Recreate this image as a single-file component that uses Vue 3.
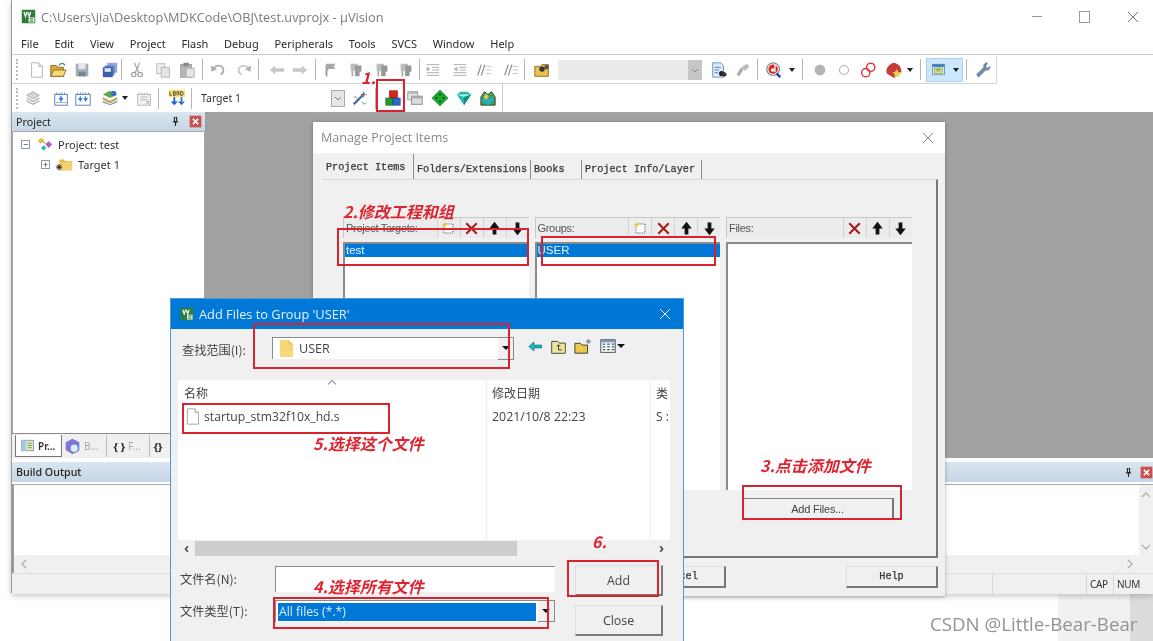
<script setup>
import { h } from 'vue'

const icons = {
  logo: '<rect x="1" y="1" width="18" height="18" rx="1" fill="#2f7d3b"/><path d="M4 4l2 6 2-6M9 4l2 6 2-6" stroke="#fff" stroke-width="1.6" fill="none"/><rect x="10" y="11" width="8" height="7" fill="#dfe8df"/><path d="M12 13h4M12 16h4" stroke="#2f7d3b" stroke-width="1.4"/>',
  new: '<path d="M4 2h8l4 4v12H4z" fill="#fff" stroke="#a9b0ba"/><path d="M12 2v4h4" fill="#e8eef5" stroke="#a9b0ba"/>',
  open: '<path d="M2 5h6l2 2h6v10H2z" fill="#d9a93c" stroke="#8a6a20"/><path d="M5 10h14l-3 7H2z" fill="#f6d97a" stroke="#8a6a20"/><path d="M11 5c2-3 5-3 7 0" stroke="#4a7fc0" fill="none" stroke-width="1.4"/>',
  save: '<rect x="3" y="3" width="14" height="14" fill="#a5adb6"/><rect x="6" y="3" width="8" height="6" fill="#e4e8ec"/><rect x="6" y="12" width="8" height="5" fill="#7b848d"/>',
  saveall: '<rect x="7" y="2" width="11" height="11" fill="#8fa7d8"/><rect x="4" y="5" width="11" height="11" fill="#5f7fc4"/><rect x="2" y="7" width="11" height="11" fill="#3f5fa8"/><rect x="4" y="8" width="7" height="4" fill="#dfe6f5"/>',
  cut: '<path d="M7 2l5 11M13 2L8 13" stroke="#a8a8a8" stroke-width="1.5"/><circle cx="6.5" cy="15" r="2.4" fill="none" stroke="#a0a0a0" stroke-width="1.4"/><circle cx="13.5" cy="15" r="2.4" fill="none" stroke="#a0a0a0" stroke-width="1.4"/>',
  copy: '<rect x="3" y="3" width="9" height="11" fill="#eee" stroke="#bbb"/><rect x="8" y="7" width="9" height="11" fill="#e4e4e4" stroke="#b4b4b4"/>',
  paste: '<rect x="3" y="4" width="12" height="14" fill="#b8b8b8" stroke="#999"/><rect x="6" y="2" width="6" height="4" fill="#888"/><rect x="9" y="8" width="9" height="10" fill="#e6e6e6" stroke="#aaa"/>',
  undo: '<path d="M5 8c3-4 10-4 11 2 0 2-1 4-3 5" stroke="#adadad" stroke-width="2" fill="none"/><path d="M2 5l1 7 6-3z" fill="#adadad"/>',
  redo: '<g transform="matrix(-1 0 0 1 20 0)"><path d="M5 8c3-4 10-4 11 2 0 2-1 4-3 5" stroke="#c0c0c0" stroke-width="1.6" fill="none"/><path d="M2 5l1 7 6-3z" fill="#b0b0b0"/></g>',
  back: '<path d="M2 10l6-5v3h10v4H8v3z" fill="#c8c8c8"/>',
  fwd: '<path d="M18 10l-6-5v3H2v4h10v3z" fill="#c8c8c8"/>',
  flag: '<path d="M5 17V4" stroke="#9a9a9a" stroke-width="2"/><path d="M5 3h10l-2 3 2 3H7v2H5z" fill="#a8a8a8"/>',
  flag2: '<path d="M4 3h8v8H4z" fill="#bbb"/><path d="M9 5h7v7h-2v5H9z" fill="#999"/><path d="M6 11v6" stroke="#aaa" stroke-width="2"/>',
  ind: '<path d="M3 4h14M9 7h8M9 10h8M3 13h14M3 16h14" stroke="#a8a8a8"/><path d="M3 6.5l4 2.5-4 2.5z" fill="#aaa"/>',
  ind2: '<path d="M3 4h14M9 7h8M9 10h8M3 13h14M3 16h14" stroke="#a8a8a8"/><path d="M7 6.5L3 9l4 2.5z" fill="#aaa"/>',
  com: '<path d="M3 16L7 4M7 16l4-12" stroke="#8e8e8e" stroke-width="1.4"/><path d="M12 6h6M12 10h6M12 14h6" stroke="#c0c0c0"/>',
  find: '<path d="M2 6h6l2-2h7v13H2z" fill="#eac04e" stroke="#8a6a20"/><circle cx="10" cy="9" r="3" fill="#333"/><circle cx="15" cy="7" r="2.5" fill="#555"/>',
  doc: '<path d="M3 2h9l3 3v13H3z" fill="#dfe9f5" stroke="#6f8fb8"/><path d="M5 7h7M5 10h5M5 13h4" stroke="#4a78b8"/><circle cx="13" cy="14" r="3" fill="#222"/><circle cx="16" cy="15" r="2.4" fill="#333"/>',
  tools: '<path d="M4 15l5-8 3 2-5 8z" fill="#aaa"/><path d="M10 6l6-3 2 4-5 4z" fill="#bcbcbc"/>',
  dsearch: '<circle cx="9" cy="9" r="7" fill="#fff" stroke="#8a9098" stroke-width="1.5"/><circle cx="9" cy="9" r="5.2" fill="#d82020"/><circle cx="8.4" cy="10" r="2" fill="#fff"/><path d="M11 4.5v8" stroke="#fff" stroke-width="1.5"/><path d="M13 14l4 4" stroke="#1c3fa8" stroke-width="2.6"/>',
  dot: '<circle cx="10" cy="10" r="6" fill="#b4b4b4"/>',
  ring: '<circle cx="10" cy="10" r="5" fill="#fff" stroke="#b4b4b4" stroke-width="1.3"/>',
  rings: '<circle cx="7.5" cy="13" r="4.6" fill="none" stroke="#d84040" stroke-width="1.6"/><circle cx="13" cy="7" r="4.6" fill="none" stroke="#d84040" stroke-width="1.6"/>',
  heart: '<path d="M10 2c5 1 9 5 8 11l-8 6-8-5C0 8 5 3 10 2z" fill="#c63a3a"/><path d="M13 9l1.5 3 3.5.5-2.5 2.2.7 3.3-3-1.6-3 1.6.7-3.3L8 12.500l3.500-.5z" fill="#e6d24a"/>',
  pwin: '<rect x="2" y="3" width="16" height="14" fill="#dfe9f5" stroke="#4f86bd"/><rect x="2" y="3" width="16" height="3.500" fill="#3c7dc0"/><rect x="5" y="8" width="10" height="7" fill="#e8e8a0" stroke="#7f9a3c"/><path d="M7 10h6M7 12h6" stroke="#5f8a2c"/>',
  wrench: '<path d="M15 2c-3 0-5 2-4 5L3 15l2 3 8-8c3 1 5-1 5-4l-3 2-2-2z" fill="#6f8fb0" stroke="#52677c" stroke-width=".6"/>',
  stack: '<path d="M10 3l7 4-7 4-7-4z" fill="#d6d6d6" stroke="#aaa"/><path d="M3 10l7 4 7-4M3 13l7 4 7-4" fill="none" stroke="#aaa" stroke-width="1.300"/>',
  t1: '<rect x="3" y="6" width="14" height="12" fill="#fff" stroke="#5878a8"/><path d="M5 4v2M8 4v2M11 4v2M14 4v2" stroke="#5878a8"/><path d="M10 7.500v5M8 10l2 3 2-3" stroke="#2878d0" fill="none" stroke-width="1.500"/><path d="M4 15h12" stroke="#9aa"/>',
  t2: '<rect x="2" y="6" width="16" height="12" fill="#fff" stroke="#5878a8"/><path d="M4 4v2M7 4v2M10 4v2M13 4v2M16 4v2" stroke="#5878a8"/><path d="M7 8v5M5 10l2 3 2-3M13 8v5M11 10l2 3 2-3" stroke="#2878d0" fill="none" stroke-width="1.300"/>',
  layers: '<path d="M10 2l8 4-8 4-8-4z" fill="#5fa84a"/><path d="M2 9l8 4 8-4v3l-8 4-8-4z" fill="#c8a858"/><path d="M2 13l8 4 8-4v2l-8 3-8-3z" fill="#7898c8"/><circle cx="14" cy="5" r="3" fill="#3a70c0"/>',
  batch: '<rect x="3" y="6" width="14" height="12" fill="#f2f2f2" stroke="#b4b4b4"/><path d="M5 4v2M8 4v2M11 4v2M14 4v2M6 9h8M6 12h8" stroke="#b4b4b4"/><path d="M12 13l4 4M16 13l-4 4" stroke="#999"/>',
  load: '<path d="M6 9v5H3l4 4 4-4H8V9z" fill="#2060c8"/><path d="M14 9v5h-3l4 4 4-4h-3V9z" fill="#2060c8" opacity=".9"/><rect x="1" y="1" width="18" height="8" fill="#f6e27a"/><path d="M2 3v4h2M6 3h2v4H6zM10 7V3h2v4M14 3v4h2l1-2-1-2z" stroke="#222" stroke-width=".8" fill="none"/>',
  wand: '<path d="M3 17L13 7" stroke="#3868b0" stroke-width="2.500"/><path d="M14 2l1 3 3 1-3 1-1 3-1-3-3-1 3-1z" fill="#7a7a7a"/><path d="M3 10l2-2 2 3M12 14l2 3 3-2" stroke="#888" fill="none"/>',
  blocks: '<rect x="6" y="2" width="9" height="8" fill="#e02020" stroke="#801010" stroke-width=".6"/><rect x="2" y="10" width="8" height="8" fill="#1e9a2e" stroke="#0c5a14" stroke-width=".6"/><rect x="10" y="10" width="8" height="8" fill="#2c68c8" stroke="#143c80" stroke-width=".6"/>',
  wins: '<rect x="2" y="3" width="11" height="9" fill="#e8e8e8" stroke="#999"/><rect x="6" y="8" width="12" height="9" fill="#dcdcdc" stroke="#888"/><rect x="6" y="8" width="12" height="2.500" fill="#aaa"/><rect x="2" y="3" width="11" height="2.500" fill="#bbb"/>',
  dgreen: '<path d="M10 1l9 9-9 9-9-9z" fill="#1ca82a" stroke="#0c7018" stroke-width=".6"/><circle cx="10" cy="6" r="1.400" fill="#063"/><circle cx="6" cy="10" r="1.400" fill="#063"/><circle cx="14" cy="10" r="1.400" fill="#063"/><circle cx="10" cy="14" r="1.400" fill="#063"/>',
  dteal: '<path d="M2 6l4-3h8l4 3-8 12z" fill="#28b8a8"/><path d="M2 6h16l-8 3z" fill="#c8f0e8"/><path d="M10 9l8-3-8 12z" fill="#10907f"/>',
  books: '<path d="M2 18V9l4-6 4 3 4-3 4 6v9z" fill="#3aa04a" stroke="#222" stroke-width=".8"/><path d="M6 8l4 4 4-4 3 5-7 5-7-5z" fill="#2ea8c8"/><path d="M8 5l3 4-3 3-3-3z" fill="#e0c84a"/>',
  pin: '<path d="M7 2h6v8h2v2h-4v6H9v-6H5v-2h2z" fill="#222"/><rect x="9" y="3" width="2" height="6" fill="#ddd"/>',
  close: '<rect x="1" y="1" width="18" height="18" fill="#c9514f"/><path d="M6 6l8 8M14 6l-8 8" stroke="#fff" stroke-width="2.400"/>',
  tree: '<path d="M2 5l5-3 3 4-5 3z" fill="#e8c040"/><path d="M11 10l4-4 4 4-4 4z" fill="#b060c8"/><path d="M6 14l3-3 3 3-3 3z" fill="#30a8c8"/><path d="M8 7l4 2" stroke="#888"/>',
  folder: '<path d="M5 5h5l1 2h8v10H5z" fill="#e8b840"/><rect x="5" y="8" width="14" height="9" fill="#f4d070"/><path d="M2 11l5 5M7 11l-5 5M4.500 10v7M1 13.500h7" stroke="#222" stroke-width="1.100"/>',
  tdash: '<rect x="4" y="4" width="12" height="12" fill="#fff" stroke="#222" stroke-dasharray="1.500 1.500"/><path d="M5 1l1.300 2.700L9 5 6.300 6.300 5 9 3.700 6.300 1 5l2.700-1.300z" fill="#e8d030"/>',
  tx: '<path d="M3 3l14 14M17 3L3 17" stroke="#a81a1a" stroke-width="2.800"/>',
  tup: '<path d="M10 1l7 9h-4.500v8h-5v-8H3z" fill="#111"/>',
  tdown: '<path d="M10 19l7-9h-4.500V2h-5v8H3z" fill="#111"/>',
  file: '<path d="M4 1h9l4 4v14H4z" fill="#fff" stroke="#9a9a9a"/><path d="M13 1v4h4" fill="#eee" stroke="#9a9a9a"/>',
  yfolder: '<path d="M3 1h9l5 4v14H3z" fill="#f6d877"/><path d="M12 1v5h5" fill="#eac45c"/>',
  barrow: '<path d="M1 10l7-6v4h10v4H8v4z" fill="#18b8c0" stroke="#0c4850" stroke-width=".7"/>',
  bup: '<path d="M2 4h7l2 2h7v12H2z" fill="#eee69a" stroke="#333"/><path d="M10 8v6h4M8 10l2-2 2 2" stroke="#222" fill="none"/>',
  bnew: '<path d="M1 7h6l2 2h6v9H1z" fill="#eac84a" stroke="#333"/><path d="M16 2v6M13 5h6M14 3l4 4M18 3l-4 4" stroke="#888"/>',
  bview: '<rect x="2" y="3" width="16" height="14" fill="#fff" stroke="#345"/><rect x="2" y="3" width="16" height="3" fill="#8098b8"/><path d="M4 8h3M9 8h3M14 8h3M4 11h3M9 11h3M14 11h3M4 14h3M9 14h3M14 14h3" stroke="#456" stroke-width="1.400"/>',
  mini: '<rect x="2" y="3" width="16" height="14" fill="#dfe9c8" stroke="#6a8a9a"/><rect x="2" y="3" width="6" height="14" fill="#a8c8e8"/><path d="M10 7h6M10 10h6M10 13h6" stroke="#6a8a2a"/>',
  cube: '<path d="M10 1l8 4v9l-8 5-8-5V5z" fill="#8870d8"/><circle cx="12" cy="12" r="5" fill="#e8e8f8" stroke="#4890d0" stroke-width="1.500"/>',
}

const Ico = (props) => h('svg', { class: 'ico', viewBox: '0 0 20 20', width: props.s || 18, height: props.s || 18, innerHTML: icons[props.n] })
Ico.props = ['n', 's']

function place(items) {
  let end = 12
  return items.map((it) => {
    const w = it.w || (it.sep ? 1 : 18)
    const left = it.c - w / 2
    const m = left - end
    end = left + w
    return { ...it, w, m }
  })
}

const bar1 = place([
  { c: 17, w: 2, grip: true }, { c: 37, i: 'new' }, { c: 58, i: 'open' }, { c: 82, i: 'save' }, { c: 110, i: 'saveall' },
  { c: 121, sep: true }, { c: 137, i: 'cut' }, { c: 163, i: 'copy' }, { c: 187, i: 'paste' }, { c: 202, sep: true },
  { c: 218, i: 'undo' }, { c: 244, i: 'redo' }, { c: 258, sep: true }, { c: 277, i: 'back' }, { c: 300, i: 'fwd' },
  { c: 315, sep: true }, { c: 331, i: 'flag' }, { c: 356, i: 'flag2' }, { c: 382, i: 'flag2' }, { c: 406, i: 'flag2' },
  { c: 419, sep: true }, { c: 433, i: 'ind' }, { c: 460, i: 'ind2' }, { c: 484, i: 'com' }, { c: 511, i: 'com' },
  { c: 524, sep: true }, { c: 542, i: 'find' }, { c: 630, w: 144, combo: true }, { c: 719, i: 'doc' }, { c: 742, i: 'tools' },
  { c: 757, sep: true }, { c: 774, i: 'dsearch' }, { c: 792, w: 7, caret: true }, { c: 802, sep: true },
  { c: 820, i: 'dot' }, { c: 844, i: 'ring' }, { c: 868, i: 'rings' }, { c: 894, i: 'heart' }, { c: 910, w: 7, caret: true },
  { c: 920, sep: true }, { c: 944.5, w: 37, hl: true, i: 'pwin' }, { c: 966, sep: true }, { c: 983, i: 'wrench' },
])
const bar2 = place([
  { c: 17, w: 2, grip: true }, { c: 33, i: 'stack' }, { c: 61, i: 't1' }, { c: 83, i: 't2' }, { c: 110, i: 'layers' },
  { c: 125, w: 7, caret: true }, { c: 144, i: 'batch' }, { c: 158, sep: true }, { c: 177, i: 'load' }, { c: 191, sep: true },
  { c: 261, w: 120, text: 'Target 1' }, { c: 338, w: 14, small: true }, { c: 360, i: 'wand' }, { c: 375, sep: true },
  { c: 393, i: 'blocks' }, { c: 415, i: 'wins' }, { c: 440, i: 'dgreen' }, { c: 464, i: 'dteal' }, { c: 488, i: 'books' },
])
const menus = ['File', 'Edit', 'View', 'Project', 'Flash', 'Debug', 'Peripherals', 'Tools', 'SVCS', 'Window', 'Help']
const tabs = [
  { t: 'Project Items', w: 91 }, { t: 'Folders/Extensions', w: 117 }, { t: 'Books', w: 51 }, { t: 'Project Info/Layer', w: 120 },
]
const cols = [
  { label: 'Project Targets:', row: 'test', tools: ['tdash', 'tx', 'tup', 'tdown'] },
  { label: 'Groups:', row: 'USER', tools: ['tdash', 'tx', 'tup', 'tdown'] },
  { label: 'Files:', row: '', tools: ['tx', 'tup', 'tdown'] },
]
const marks = [
  { t: '1.', x: 361, y: 66 }, { t: '2.修改工程和组', x: 343, y: 200 }, { t: '3.点击添加文件', x: 760, y: 454 },
  { t: '4.选择所有文件', x: 313, y: 575 }, { t: '5.选择这个文件', x: 313, y: 432 }, { t: '6.', x: 592, y: 530 },
]
const boxes = [
  [376, 79, 29, 33], [337, 228, 192, 38], [541, 236, 175, 30], [253, 323, 257, 46],
  [182, 403, 208, 31], [742, 485, 160, 35], [567, 560, 92, 37], [273, 597, 276, 32],
]
</script>

<template>
  <div class="page">
    <div class="strip"></div>
    <div class="main">
      <div class="title">
        <Ico n="logo" :s="15" />
        <span class="title-text">C:\Users\jia\Desktop\MDKCode\OBJ\test.uvprojx - µVision</span>
        <div class="wbtns">
          <span class="wmin"></span><span class="wmax"></span>
          <svg class="wx" viewBox="0 0 12 12" width="12" height="12"><path d="M1 1l10 10M11 1L1 11" stroke="#777" fill="none" /></svg>
        </div>
      </div>
      <div class="menu"><span v-for="m in menus" :key="m">{{ m }}</span></div>
      <div class="bar bar1">
        <template v-for="(b, i) in bar1" :key="i">
          <div class="slot" :style="{ width: b.w + 'px', marginLeft: b.m + 'px' }" :class="{ sep: b.sep, grip: b.grip, hl: b.hl, combo: b.combo, caret: b.caret }">
            <Ico v-if="b.i" :n="b.i" />
            <span v-if="b.hl" class="caretin"></span>
            <span v-if="b.combo" class="drop"><svg viewBox="0 0 10 10" width="10" height="10"><path d="M2 4l3 3 3-3" stroke="#888" fill="none" /></svg></span>
          </div>
        </template>
      </div>
      <div class="bar bar2">
        <template v-for="(b, i) in bar2" :key="i">
          <div class="slot" :style="{ width: b.w + 'px', marginLeft: b.m + 'px' }" :class="{ sep: b.sep, grip: b.grip, caret: b.caret, label: b.text, small: b.small }">
            <Ico v-if="b.i" :n="b.i" />
            <template v-if="b.text">{{ b.text }}</template>
            <svg v-if="b.small" viewBox="0 0 10 10" width="10" height="10"><path d="M2 4l3 3 3-3" stroke="#777" fill="none" /></svg>
          </div>
        </template>
        <div class="endsep"></div>
      </div>
      <div class="work">
        <div class="panel">
          <div class="ptitle"><span>Project</span><Ico n="pin" :s="11" /><Ico n="close" :s="13" /></div>
          <div class="ptree">
            <div class="node n1"><span class="pm">−</span><Ico n="tree" :s="17" /><span>Project: test</span></div>
            <div class="node n2"><span class="pm">+</span><Ico n="folder" :s="18" /><span>Target 1</span></div>
          </div>
          <div class="ptabs">
            <div class="ptab on"><Ico n="mini" :s="15" /><span>Pr...</span></div>
            <div class="ptab t2"><Ico n="cube" :s="17" /><span class="dim">B...</span></div>
            <div class="ptab t3"><b>{ }</b><span class="dim">F...</span></div>
            <div class="ptab t4"><b>{}</b></div>
          </div>
        </div>
      </div>
      <div class="build">
        <div class="btitle"><span>Build Output</span><Ico n="pin" :s="11" /><Ico n="close" :s="13" /></div>
        <div class="bbody">
          <div class="bvs">
            <svg viewBox="0 0 10 10" width="10" height="10"><path d="M1 7l4-4 4 4" stroke="#b4b4b4" stroke-width="1.500" fill="none" /></svg>
            <svg viewBox="0 0 10 10" width="10" height="10"><path d="M1 3l4 4 4-4" stroke="#b4b4b4" stroke-width="1.500" fill="none" /></svg>
          </div>
        </div>
        <div class="bhs">
          <svg viewBox="0 0 10 10" width="10" height="10"><path d="M7 1L3 5l4 4" stroke="#b4b4b4" stroke-width="1.500" fill="none" /></svg>
          <svg viewBox="0 0 10 10" width="10" height="10"><path d="M3 1l4 4-4 4" stroke="#b4b4b4" stroke-width="1.500" fill="none" /></svg>
        </div>
        <div class="status"><span class="scell wide"></span><span class="scell">CAP</span><span class="scell">NUM</span><span class="sgrip"></span></div>
      </div>
    </div>

    <div class="manage">
      <div class="mtitle"><span>Manage Project Items</span>
        <svg viewBox="0 0 12 12" width="12" height="12"><path d="M1 1l10 10M11 1L1 11" stroke="#888" fill="none" /></svg>
      </div>
      <div class="mtabs"><span v-for="(t, i) in tabs" :key="t.t" class="mtab" :class="{ first: i === 0 }" :style="{ width: t.w + 'px' }">{{ t.t }}</span></div>
      <div class="mpage">
        <div class="mcols">
          <div v-for="c in cols" :key="c.label" class="mcol">
            <div class="mhead"><span class="mlabel">{{ c.label }}</span>
              <span v-for="(n, k) in c.tools" :key="k" class="mtool"><Ico :n="n" :s="15" /></span>
            </div>
            <div class="mlist"><div v-if="c.row" class="mrow">{{ c.row }}</div></div>
          </div>
        </div>
        <div class="maddrow"><div class="btn addfiles">Add Files...</div></div>
      </div>
      <div class="mfoot"><div class="btn mono">Cancel</div><div class="btn mono">Help</div></div>
    </div>

    <div class="add">
      <div class="atitle"><Ico n="logo" :s="14" /><span>Add Files to Group 'USER'</span>
        <svg viewBox="0 0 12 12" width="12" height="12"><path d="M1 1l10 10M11 1L1 11" stroke="#fff" fill="none" /></svg>
      </div>
      <div class="alook">
        <span class="alabel">查找范围(I):</span>
        <div class="acombo"><Ico n="yfolder" :s="19" /><span class="val">USER</span><span class="adrop"></span></div>
        <div class="aicons">
          <Ico n="barrow" :s="15" /><Ico n="bup" :s="17" /><Ico n="bnew" :s="18" /><Ico n="bview" :s="18" /><span class="vcaret"></span>
        </div>
      </div>
      <div class="alist">
        <div class="ahead">
          <span class="c1">名称<i class="chev"></i></span><span class="c2">修改日期</span><span class="c3">类</span>
        </div>
        <div class="arow">
          <span class="c1"><Ico n="file" :s="17" /><em>startup_stm32f10x_hd.s</em></span><span class="c2">2021/10/8 22:23</span><span class="c3">S :</span>
        </div>
      </div>
      <div class="ascroll"><span class="lt">‹</span><div class="thumb"></div><span class="rt">›</span></div>
      <div class="abottom">
        <div class="afields">
          <div class="afield"><span class="alabel2">文件名(N):</span><div class="ainput"></div></div>
          <div class="afield f2"><span class="alabel2">文件类型(T):</span>
            <div class="aselect"><div class="asel">All files (*.*)</div><span class="adrop2"></span></div>
          </div>
        </div>
        <div class="abtns"><div class="btn2">Add</div><div class="btn2">Close</div></div>
      </div>
    </div>

    <div v-for="(b, i) in boxes" :key="i" class="rbox" :style="{ left: b[0] + 'px', top: b[1] + 'px', width: b[2] + 'px', height: b[3] + 'px' }"></div>
    <span v-for="m in marks" :key="m.t" class="mark" :style="{ left: m.x + 'px', top: m.y + 'px' }">{{ m.t }}</span>
    <div class="wm">CSDN @Little-Bear-Bear</div>
  </div>
</template>

<style>
html, body { margin: 0; background: #fff; overflow: hidden; }
</style>

<style scoped>
.page { position: relative; width: 1153px; height: 641px; overflow: hidden; background: #fff; font-family: "Noto Sans", "Open Sans", sans-serif; filter: blur(.55px); color: #222; }
.ico { display: block; flex: none; }
.strip { position: absolute; left: 1058px; top: 590px; width: 95px; height: 51px; background: linear-gradient(90deg, #f1f1f3 0 76%, #dcdcdf 76% 100%); }

.main { position: absolute; left: 11px; top: 0; width: 1142px; height: 593px; display: flex; flex-direction: column; background: #fff; box-shadow: 0 3px 6px rgba(0,0,0,.22); border-left: 1px solid #9a9a9a; box-sizing: border-box; }
.title { height: 33px; flex: none; display: flex; align-items: center; padding-left: 9px; gap: 5px; }
.title-text { font-family: "Open Sans", sans-serif; font-size: 12.8px; color: #7a7a7a; white-space: nowrap; }
.wbtns { margin-left: auto; display: flex; align-items: center; }
.wmin { width: 10px; height: 1px; background: #999; margin-right: 37px; }
.wmax { width: 9px; height: 10px; border: 1px solid #999; margin-right: 37px; }
.wx { margin-right: 14px; }
.menu { height: 22px; flex: none; display: flex; align-items: center; gap: 15.8px; padding-left: 9px; font-size: 11px; color: #2a2a2a; border-bottom: 1px solid #c9c9c9; box-sizing: border-box; }

.bar { display: flex; align-items: center; flex: none; }
.bar1 { height: 28px; width: 985px; margin-top: 1px; border-right: 1px solid #d9d9d9; border-bottom: 1px solid #d2d2d2; box-sizing: border-box; }
.bar2 { height: 28px; box-sizing: border-box; }
.slot { flex: none; display: flex; justify-content: center; align-items: center; height: 20px; box-sizing: border-box; }
.sep { background: #b5b5b5; height: 21px; }
.grip { border-left: 2px dotted #bbb; height: 21px; }
.caret { position: relative; }
.caret::after, .caretin { content: ""; display: block; border-left: 3.5px solid transparent; border-right: 3.5px solid transparent; border-top: 4px solid #222; }
.caretin { margin-left: 7px; }
.hl { background: #cce6fb; border: 1px solid #a6d2f2; height: 24px; }
.hl :deep(svg) { width: 15px; height: 15px; }
.combo { background: #ebebeb; justify-content: flex-end; }
.drop { width: 14px; height: 20px; background: #c6c6c6; display: flex; align-items: center; justify-content: center; }
.label { justify-content: flex-start; font-size: 10.5px; color: #333; }
.small { background: #e6e6e6; border: 1px solid #aaa; height: 17px; }
.endsep { width: 1px; height: 28px; background: #cfcfcf; margin-left: 5px; }

.work { height: 346px; flex: none; background: #a1a1a1; display: flex; }
.panel { width: 193px; background: #f0f0f0; display: flex; flex-direction: column; }
.ptitle, .btitle { display: flex; align-items: center; background: linear-gradient(#d9e5ef, #c6d6e5); font-size: 10.7px; color: #222; flex: none; }
.ptitle { height: 19px; padding: 0 3px 0 4px; }
.ptitle span, .btitle span { margin-right: auto; }
.ptitle svg:first-of-type { margin-right: 8px; }
.btitle svg:first-of-type { margin-right: 6px; }
.ptree { flex: 1; background: #fff; border: 1px solid #a8a8a8; border-bottom: 0; font-size: 11px; color: #333; padding: 2px 0 0; box-sizing: border-box; }
.node { display: flex; align-items: center; height: 20px; }
.n1 { padding-left: 8px; gap: 5.500px; }
.n2 { padding-left: 28px; gap: 5px; }
.pm { width: 9px; height: 9px; border: 1px solid #8a9aa8; font-size: 9px; line-height: 8px; text-align: center; color: #333; flex: none; box-sizing: border-box; }
.ptabs { height: 25px; flex: none; display: flex; align-items: center; padding-left: 3px; font-size: 10px; border-top: 1px solid #8a8a8a; box-sizing: border-box; }
.ptab { display: flex; align-items: center; height: 22px; border-right: 1px solid #bbb; white-space: nowrap; gap: 3px; }
.ptab b { font-size: 11px; }
.ptab.on { width: 47px; padding-left: 4px; box-sizing: border-box; background: #fff; border: 1px solid #777; border-top: 0; font-weight: 600; color: #333; }
.t2 { padding: 0 8px 0 2px; border-right: 0; }
.t3 { padding: 0 8px 0 6px; border-left: 1px solid #bbb; }
.t4 { padding-left: 4px; border-right: 0; }
.dim { color: #a8a8a8; }

.build { flex: 1; display: flex; flex-direction: column; margin-top: 4px; min-height: 0; }
.btitle { height: 20px; margin-bottom: 2px; font-weight: 500; padding: 0 0 0 4px; }
.bbody { height: 71px; flex: none; background: #fff; border-left: 2px solid #999; border-top: 1px solid #aaa; display: flex; justify-content: flex-end; box-sizing: border-box; }
.bvs { width: 14px; background: #f0f0f0; display: flex; flex-direction: column; justify-content: space-between; align-items: center; padding: 5px 0 3px; box-sizing: border-box; }
.bhs { height: 18px; flex: none; background: #f0f0f0; display: flex; justify-content: space-between; align-items: center; padding: 0 18px 0 5px; border-left: 2px solid #999; }
.status { flex: 1; display: flex; align-items: center; justify-content: flex-end; background: #f0f0f0; border-top: 1px solid #ddd; font-size: 10px; letter-spacing: -.3px; color: #333; }
.scell { border-left: 1px solid #d8d8d8; padding: 0 0 0 3px; line-height: 20px; width: 27px; white-space: nowrap; box-sizing: border-box; }
.scell.wide { width: 94px; height: 20px; }
.sgrip { width: 13px; }

.manage { position: absolute; left: 313px; top: 122px; width: 632px; height: 474px; background: #f0f0f0; box-shadow: 0 1px 4px rgba(0,0,0,.3); display: flex; flex-direction: column; }
.mtitle { height: 31px; flex: none; background: #fff; display: flex; align-items: center; justify-content: space-between; padding: 0 11px 0 8px; font-family: "Open Sans", sans-serif; font-size: 12.6px; color: #8a8a8a; }
.mtabs { height: 26px; flex: none; display: flex; padding-left: 10px; align-items: flex-end; font-family: "Liberation Mono", monospace; font-size: 10.2px; -webkit-text-stroke: .25px #333; color: #333; box-sizing: border-box; }
.mtab { height: 19px; line-height: 20px; padding-left: 3px; border-right: 1px solid #8a8a8a; white-space: nowrap; box-sizing: border-box; flex: none; }
.mtab.first { height: 25px; line-height: 28px; }
.mpage { height: 379px; width: 616px; margin-left: 9px; flex: none; border-top: 1px solid #d8d8d8; border-right: 2px solid #777; border-bottom: 2px solid #777; box-sizing: border-box; padding: 37px 0 0 21px; }
.mcols { display: flex; gap: 6px; }
.mcol { width: 185.500px; }
.mhead { height: 21px; display: flex; align-items: center; border-top: 1px solid #c8c8c8; border-left: 1px solid #c8c8c8; font-family: "Liberation Sans", sans-serif; font-size: 11px; letter-spacing: -.3px; color: #555; padding-left: 2px; box-sizing: border-box; background: #ececec; }
.mlabel { margin-right: auto; }
.mtool { width: 22px; height: 20px; display: flex; align-items: center; justify-content: center; border-left: 1px solid #d2d2d2; }
.mlist { margin-top: 4px; height: 248px; background: #fff; border-left: 2px solid #8a8a8a; border-top: 2px solid #8a8a8a; box-sizing: border-box; }
.mrow { height: 13px; background: #0078d7; color: #e8f2fb; font-family: "Liberation Sans", sans-serif; font-size: 11.5px; line-height: 13px; padding-left: 1px; }
.maddrow { margin: 8px 42px 0 0; display: flex; justify-content: flex-end; }
.btn { height: 22px; display: flex; align-items: center; justify-content: center; background: #f0f0f0; border-top: 1px solid #ddd; border-left: 1px solid #ddd; border-right: 2px solid #777; border-bottom: 2px solid #777; box-sizing: border-box; font-family: "Liberation Sans", sans-serif; font-size: 11px; color: #444; letter-spacing: -.2px; }
.addfiles { width: 152px; border-top-color: #888; border-left-color: #888; }
.mfoot { margin-top: 8px; display: flex; justify-content: flex-end; gap: 120px; padding-right: 7px; }
.mono { width: 92px; font-family: "Liberation Mono", monospace; font-size: 10.2px; -webkit-text-stroke: .25px #333; letter-spacing: 0; color: #333; }

.add { position: absolute; left: 170px; top: 298px; width: 514px; height: 360px; background: #f0f0f0; border: 1px solid #4d9ae0; box-sizing: border-box; display: flex; flex-direction: column; }
.atitle { height: 30px; flex: none; background: #0078d7; color: #e8f2fb; display: flex; align-items: center; padding: 0 12px 0 9px; font-family: "Open Sans", sans-serif; font-size: 12.8px; gap: 5px; }
.atitle span { margin-right: auto; }
.alook { display: flex; align-items: center; height: 22px; margin-top: 8px; flex: none; }
.alabel { width: 90px; padding: 3px 0 0 11px; box-sizing: border-box; font-family: "Noto Sans CJK SC", sans-serif; font-size: 12.2px; color: #444; white-space: nowrap; }
.acombo { width: 242px; height: 22px; background: #fff; border-top: 1px solid #8a8a8a; border-left: 1px solid #8a8a8a; display: flex; align-items: center; padding-left: 4px; box-sizing: border-box; gap: 2px; margin-left: 11px; }
.val { font-family: "Open Sans", sans-serif; font-size: 12.6px; color: #444; margin-left: 1px; }
.adrop, .adrop2 { margin-left: auto; width: 16px; height: 22px; flex: none; background: #f0f0f0; border-right: 1px solid #888; border-bottom: 1px solid #888; box-sizing: border-box; display: flex; align-items: center; justify-content: center; }
.adrop::after, .adrop2::after, .vcaret { content: ""; display: block; border-left: 4px solid transparent; border-right: 4px solid transparent; border-top: 4px solid #111; }
.aicons { display: flex; align-items: center; gap: 7px; margin-left: 14px; margin-top: -4px; }
.vcaret { margin-left: -7px; }
.alist { height: 160px; flex: none; margin: 21px 13px 0 7px; background: #fff; font-family: "Noto Sans CJK SC", "Open Sans", sans-serif; font-size: 12px; color: #444; overflow: hidden; position: relative; }
.ahead, .arow { display: flex; }
.ahead { height: 21px; align-items: flex-end; }
.arow { height: 24px; align-items: center; margin-top: 3px; }
.c1 { width: 308px; padding-left: 6px; box-sizing: border-box; display: flex; align-items: center; position: relative; }
.c2 { width: 164px; padding-left: 6px; box-sizing: border-box; }
.c3 { padding-left: 6px; white-space: nowrap; }
.arow .c1 em { font-style: normal; font-family: "Open Sans", sans-serif; font-size: 12.2px; margin-left: 3px; white-space: nowrap; }
.arow .c2 { font-family: "Open Sans", sans-serif; font-size: 12.4px; }
.arow .c3 { font-family: "Open Sans", sans-serif; }
.alist::before, .alist::after { content: ""; position: absolute; top: 0; bottom: 0; width: 1px; background: #eee; }
.alist::before { left: 308px; }
.alist::after { left: 472px; }
.chev { position: absolute; left: 151px; top: -3px; width: 5px; height: 5px; border-left: 1px solid #888; border-top: 1px solid #888; transform: rotate(45deg); }
.ascroll { height: 16px; flex: none; margin: 0 13px 0 7px; background: #f0f0f0; display: flex; align-items: center; position: relative; color: #555; font-size: 14px; font-weight: 700; line-height: 14px; }
.lt { width: 17px; text-align: center; }
.rt { margin-left: auto; width: 17px; text-align: center; }
.thumb { width: 322px; height: 15px; background: #cdcdcd; }
.abottom { display: flex; margin-top: 10px; padding-left: 9px; flex: none; }
.afields { width: 395px; font-family: "Noto Sans CJK SC", sans-serif; font-size: 12.200px; color: #444; }
.afield { display: flex; align-items: center; }
.alabel2 { width: 95px; white-space: nowrap; }
.ainput { width: 280px; height: 26px; background: #fff; border-top: 1px solid #8a8a8a; border-left: 1px solid #8a8a8a; box-sizing: border-box; }
.f2 { margin-top: 8px; }
.aselect { width: 280px; height: 22px; background: #fff; border-top: 1px solid #8a8a8a; border-left: 1px solid #8a8a8a; box-sizing: border-box; display: flex; align-items: center; padding-left: 2px; }
.asel { width: 258px; height: 18px; line-height: 18px; background: #0078d7; color: #dcecf9; font-family: "Open Sans", sans-serif; font-size: 12.2px; padding-left: 1px; box-sizing: border-box; }
.adrop2 { height: 21px; width: 17px; }
.abtns { display: flex; flex-direction: column; gap: 9px; margin-top: -1px; }
.btn2 { width: 88px; height: 31px; display: flex; align-items: center; justify-content: center; background: #f0f0f0; border-top: 1px solid #ddd; border-left: 1px solid #ddd; border-right: 2px solid #7a7a7a; border-bottom: 2px solid #7a7a7a; box-sizing: border-box; font-family: "Open Sans", sans-serif; font-size: 12.4px; color: #444; }

.rbox { position: absolute; border: 2px solid #d9232e; box-sizing: border-box; }
.mark { position: absolute; font-family: "Noto Sans CJK SC", sans-serif; font-style: italic; font-weight: 700; font-size: 16px; line-height: 22px; color: #de2430; white-space: nowrap; }
.wm { position: absolute; left: 930px; top: 611px; font-family: "Open Sans", sans-serif; font-size: 18.700px; line-height: 25px; color: #939393; white-space: nowrap; }
</style>
